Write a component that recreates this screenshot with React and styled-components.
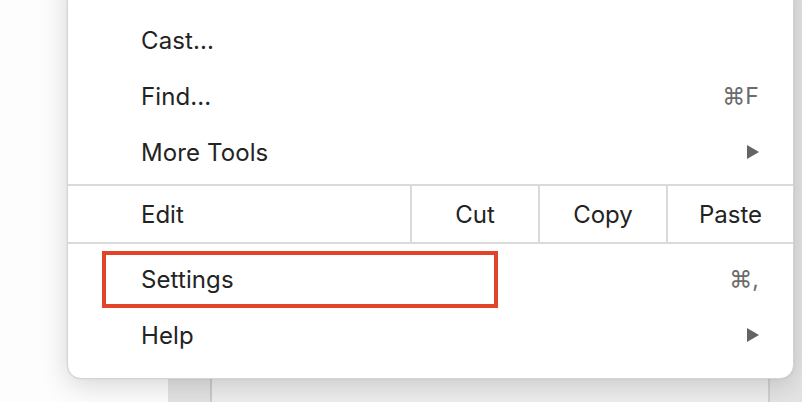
import React from "react";
import styled, { createGlobalStyle } from "styled-components";

const GlobalStyle = createGlobalStyle`
  html, body {
    margin: 0;
    padding: 0;
    width: 802px;
    height: 402px;
    overflow: hidden;
    background: #ffffff;
    font-family: Inter, "Noto Sans", "Liberation Sans", sans-serif;
  }
`;

const Stage = styled.div`
  position: relative;
  width: 802px;
  height: 402px;
  display: flex;
  overflow: hidden;
  background: #fcfcfc;
`;

const Column = styled.div`
  width: ${(p) => p.$width}px;
  flex: ${(p) => (p.$width ? "none" : "1")};
  height: 100%;
  background: ${(p) => p.$bg};
  border-right: ${(p) => (p.$line ? `2px solid ${p.$line}` : "none")};
  box-sizing: border-box;
`;

const Menu = styled.div`
  position: absolute;
  left: 67px;
  top: -30px;
  width: 727px;
  box-sizing: border-box;
  background: #ffffff;
  border-radius: 14px;
  border: 1px solid #d4d4d4;
  box-shadow: 0 6px 28px rgba(0, 0, 0, 0.16), 0 0 2px rgba(0, 0, 0, 0.1);
  padding: 41px 0 15px;
  color: #232323;
`;

const Row = styled.div`
  position: relative;
  height: 56px;
  display: flex;
  align-items: center;
  justify-content: space-between;
  padding: 0 34px 0 73px;
  font-size: 24px;
  letter-spacing: 0.1px;
`;

const Shortcut = styled.span`
  color: #6b6b6b;
  font-size: 23px;
`;

const Arrow = styled.span`
  width: 0;
  height: 0;
  margin-right: 0;
  border-top: 7px solid transparent;
  border-bottom: 7px solid transparent;
  border-left: 12px solid #646464;
`;

const Divider = styled.div`
  height: 2px;
  background: #dadada;
  margin: ${(p) => p.$margin};
`;

const EditRow = styled.div`
  display: grid;
  grid-template-columns: 342px 128px 128px 1fr;
  height: 56px;
  font-size: 24px;
`;

const EditCell = styled.div`
  display: flex;
  align-items: center;
  justify-content: ${(p) => (p.$first ? "flex-start" : "center")};
  padding-left: ${(p) => (p.$first ? "73px" : "0")};
  border-left: ${(p) => (p.$first ? "none" : "2px solid #dadada")};
`;

const Highlight = styled.div`
  position: absolute;
  left: 34px;
  top: 0;
  width: 396px;
  height: 57px;
  box-sizing: border-box;
  border: 4px solid #e2432b;
  pointer-events: none;
`;

export default function App() {
  return (
    <>
      <GlobalStyle />
      <Stage>
        <Column $width={168} $bg="#fdfdfd" />
        <Column $width={44} $bg="#e3e3e3" $line="#cbcbcb" />
        <Column $width={558} $bg="#eeeeee" $line="#d0d0d0" />
        <Column $bg="#e4e4e4" />
        <Menu>
          <Row>Cast...</Row>
          <Row>
            Find...
            <Shortcut>⌘F</Shortcut>
          </Row>
          <Row>
            More Tools
            <Arrow />
          </Row>
          <Divider $margin="4px 0 0" />
          <EditRow>
            <EditCell $first>Edit</EditCell>
            <EditCell>Cut</EditCell>
            <EditCell>Copy</EditCell>
            <EditCell>Paste</EditCell>
          </EditRow>
          <Divider $margin="0 0 7px" />
          <Row>
            <Highlight />
            Settings
            <Shortcut>⌘,</Shortcut>
          </Row>
          <Row>
            Help
            <Arrow />
          </Row>
        </Menu>
      </Stage>
    </>
  );
}
